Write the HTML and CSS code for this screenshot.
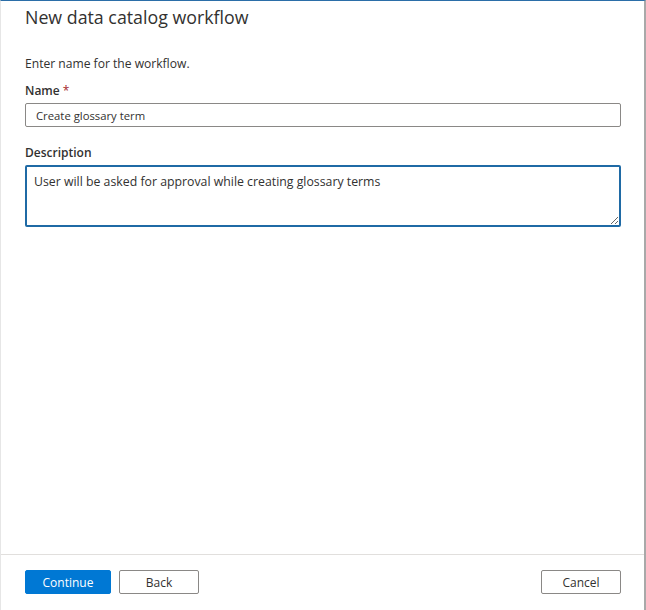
FILE: index.html
```html
<!DOCTYPE html>
<html lang="en">
<head>
<meta charset="utf-8">
<title>New data catalog workflow</title>
<link rel="stylesheet" href="styles.css">
</head>
<body>
<div class="panel">
  <div class="content">
    <h1 class="title">New data catalog workflow</h1>
    <p class="intro">Enter name for the workflow.</p>
    <div class="field">
      <label class="label" for="name">Name <span class="req">*</span></label>
      <input id="name" class="input" type="text" value="Create glossary term">
    </div>
    <div class="field field-desc">
      <label class="label" for="desc">Description</label>
      <textarea id="desc" class="textarea">User will be asked for approval while creating glossary terms</textarea>
    </div>
  </div>
  <div class="footer">
    <div class="left-actions">
      <button class="btn btn-primary">Continue</button>
      <button class="btn">Back</button>
    </div>
    <button class="btn">Cancel</button>
  </div>
</div>
</body>
</html>
```
FILE: styles.css
```css
* { box-sizing: border-box; }
html, body { margin: 0; padding: 0; background: #fff; }
body {
  font-family: "Open Sans", "Noto Sans", sans-serif;
  color: #323130;
  width: 646px;
  height: 610px;
  overflow: hidden;
}
.panel {
  height: 610px;
  width: 646px;
  display: flex;
  flex-direction: column;
  border-top: 1px solid #2b6ea8;
  border-left: 1px solid #e6e6e6;
  border-right: 2px solid #a9a9a9;
}
.content {
  flex: 1;
  padding: 4px 23px 0 24px;
}
.title {
  margin: 0;
  font-size: 17.8px;
  font-weight: 400;
  line-height: 24px;
  color: #323130;
}
.intro {
  margin: 27px 0 0;
  font-size: 12.1px;
  line-height: 16px;
}
.field { margin-top: 11px; display: flex; flex-direction: column; }
.field-desc { margin-top: 18px; }
.label {
  font-size: 12px;
  font-weight: 600;
  line-height: 16px;
  margin-bottom: 4px;
}
.req { color: #a4262c; font-weight: 400; }
.input {
  height: 24px;
  width: 596px;
  border: 1px solid #8a8886;
  border-radius: 2px;
  padding: 0 10px;
  font-family: inherit;
  font-size: 11.3px;
  color: #323130;
  outline: none;
}
.textarea {
  height: 62px;
  width: 596px;
  border: 2px solid #1f6aa5;
  border-radius: 2px;
  padding: 7px 7px;
  font-family: inherit;
  font-size: 12.3px;
  line-height: 16px;
  color: #323130;
  resize: vertical;
  outline: none;
}
.footer {
  border-top: 1px solid #e1dfdd;
  height: 56px;
  padding: 15px 23px 0 24px;
  display: flex;
  justify-content: space-between;
  align-items: flex-start;
}
.left-actions { display: flex; gap: 8px; }
.btn {
  height: 24px;
  width: 80px;
  border: 1px solid #8a8886;
  border-radius: 2px;
  background: #fff;
  color: #323130;
  font-family: inherit;
  font-size: 12px;
  padding: 0;
}
.btn-primary {
  width: 86px;
  background: #0078d4;
  border-color: #0078d4;
  color: #fff;
}
```
